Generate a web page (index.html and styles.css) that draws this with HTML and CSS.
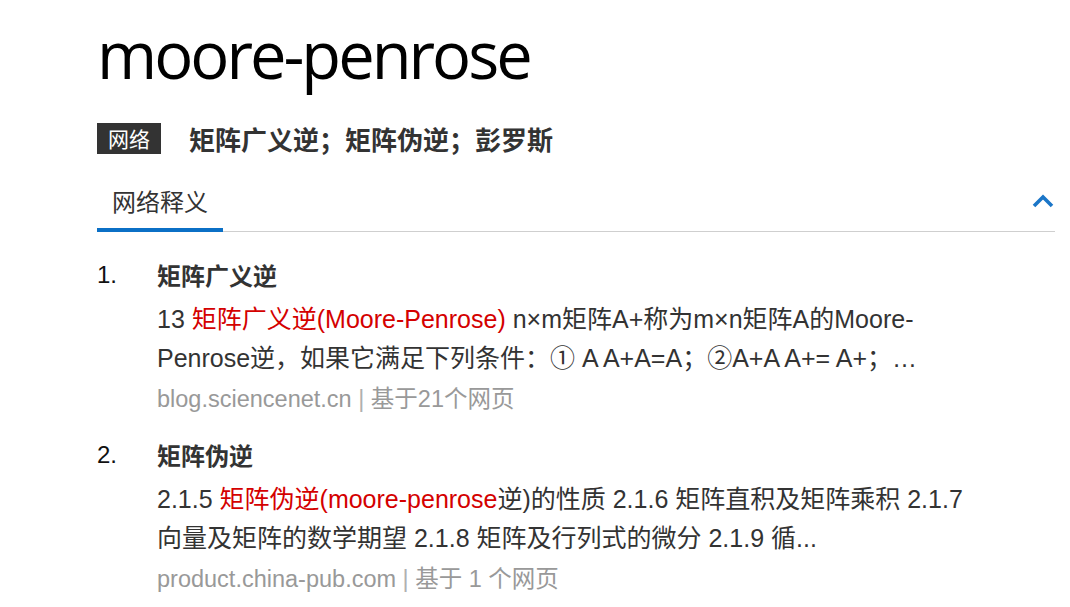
FILE: index.html
```html
<!DOCTYPE html>
<html lang="zh">
<head>
<meta charset="utf-8">
<link rel="stylesheet" href="styles.css">
</head>
<body>
<div class="page">
  <h1 class="word">moore-penrose</h1>
  <div class="trans">
    <span class="badge">网络</span>
    <span class="trans-text">矩阵广义逆；矩阵伪逆；彭罗斯</span>
  </div>
  <div class="tabs">
    <div class="tab active">网络释义</div>
    <svg class="chev" viewBox="0 0 22 14" width="22" height="14"><path d="M2 12 L11 3 L20 12" fill="none" stroke="#1b76c8" stroke-width="3.6"/></svg>
  </div>
  <ol class="defs">
    <li class="def">
      <span class="num">1.</span>
      <div class="def-body">
        <div class="def-title">矩阵广义逆</div>
        <p class="def-text">13 <span class="hl">矩阵广义逆(Moore-Penrose)</span> n×m矩阵A+称为m×n矩阵A的Moore-Penrose逆，如果它满足下列条件：① A A+A=A；②A+A A+= A+；…</p>
        <div class="src">blog.sciencenet.cn <span class="bar">|</span> 基于21个网页</div>
      </div>
    </li>
    <li class="def">
      <span class="num">2.</span>
      <div class="def-body">
        <div class="def-title">矩阵伪逆</div>
        <p class="def-text">2.1.5 <span class="hl">矩阵伪逆(moore-penrose</span>逆)的性质 2.1.6 矩阵直积及矩阵乘积 2.1.7 向量及矩阵的数学期望 2.1.8 矩阵及行列式的微分 2.1.9 循...</p>
        <div class="src">product.china-pub.com <span class="bar">|</span> 基于 1 个网页</div>
      </div>
    </li>
  </ol>
</div>
</body>
</html>
```
FILE: styles.css
```css
html, body {
  margin: 0;
  padding: 0;
  background: #fff;
}
body {
  font-family: "Liberation Sans", Arial, "Noto Sans CJK SC", sans-serif;
  color: #333;
}
.page {
  padding: 0 15px 0 97px;
}
.word {
  margin: 0;
  padding-top: 14px;
  font-family: "Open Sans", "Noto Sans", sans-serif;
  font-weight: 400;
  font-size: 65px;
  line-height: 80px;
  color: #000;
  letter-spacing: -3px;
}
.trans {
  display: flex;
  align-items: center;
  margin-top: 28px;
  height: 32px;
}
.badge {
  background: #333;
  color: #fff;
  font-family: "Noto Sans CJK SC", sans-serif;
  font-size: 21px;
  line-height: 31px;
  padding: 0 11px;
  height: 31px;
}
.trans-text {
  margin-left: 28px;
  font-family: "Noto Sans CJK SC", sans-serif;
  font-weight: 700;
  font-size: 26px;
  color: #333;
}
.tabs {
  display: flex;
  align-items: center;
  justify-content: space-between;
  margin-top: 27px;
  border-bottom: 1px solid #cfcfcf;
}
.tab {
  font-family: "Noto Sans CJK SC", sans-serif;
  font-size: 24px;
  line-height: 40px;
  padding: 0 15px 7px;
  color: #333;
  border-bottom: 4px solid #0b70c6;
  margin-bottom: -1px;
}
.chev {
  margin-right: 1px;
  margin-top: -10px;
}
.defs {
  list-style: none;
  margin: 23px 0 0;
  padding: 0;
}
.def {
  display: flex;
  margin-bottom: 15px;
}
.num {
  width: 60px;
  flex: none;
  font-size: 24px;
  line-height: 40px;
  color: #111;
}
.def-body {
  width: 820px;
}
.def-title {
  font-family: "Noto Sans CJK SC", sans-serif;
  font-weight: 700;
  font-size: 24px;
  line-height: 40px;
  color: #333;
}
.def-text {
  margin: 5px 0 0;
  font-size: 25px;
  line-height: 39px;
  color: #333;
}
.hl {
  color: #d40000;
}
.src {
  font-size: 23.5px;
  line-height: 42px;
  color: #999;
}
.bar {
  color: #b0b0b0;
}
```
